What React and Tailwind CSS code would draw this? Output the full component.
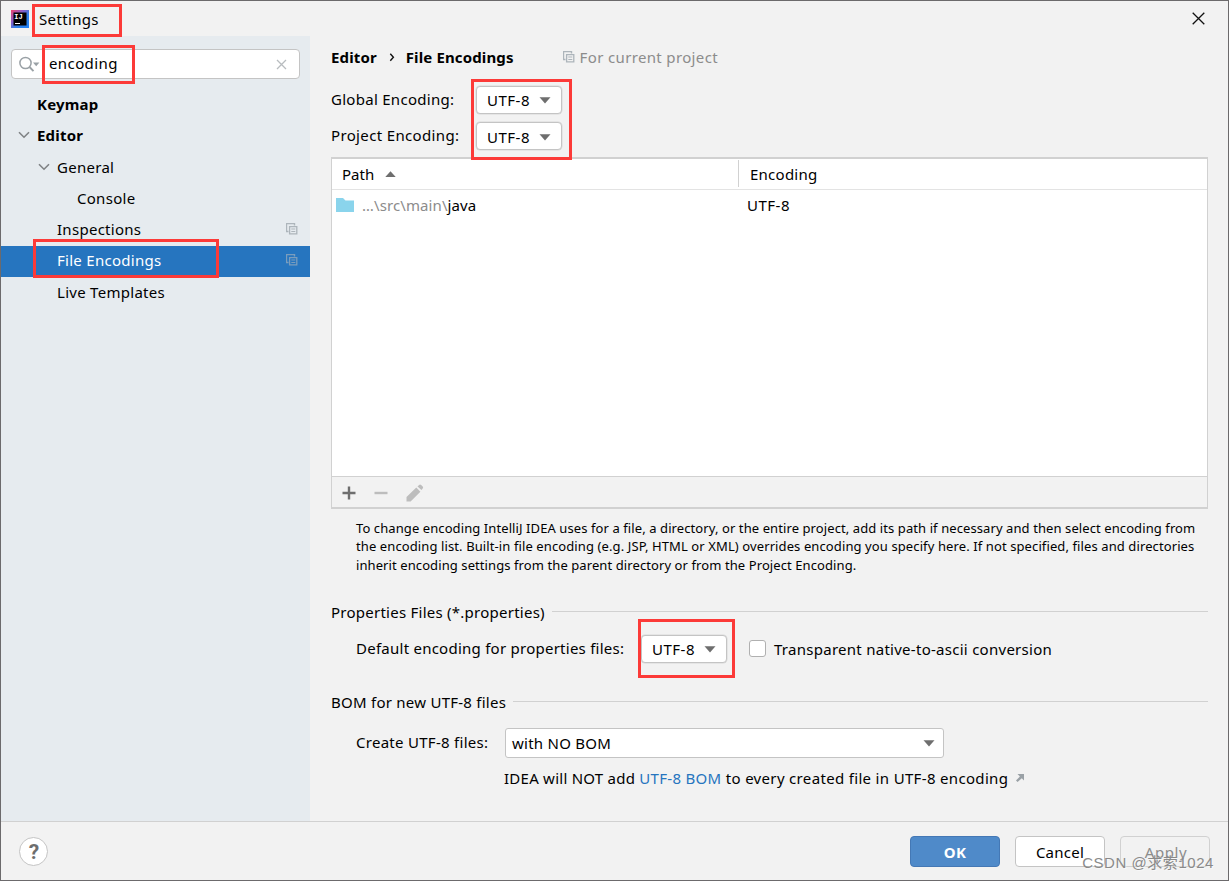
import { useState } from "react";

const treeItems = [
  { label: "Keymap", indent: "pl-[36px]", bold: true },
  { label: "Editor", indent: "pl-[17px]", bold: true, open: true },
  { label: "General", indent: "pl-[37px]", open: true },
  { label: "Console", indent: "pl-[76px]" },
  { label: "Inspections", indent: "pl-[56px]", project: true },
  { label: "File Encodings", indent: "pl-[56px]", project: true },
  { label: "Live Templates", indent: "pl-[56px]" },
];

function AppLogo() {
  return (
    <svg width="18" height="18" viewBox="0 0 18 18" className="shrink-0">
      <defs>
        <linearGradient id="logo" x1="0" y1="0" x2="1" y2="1">
          <stop offset="0" stopColor="#f0436f" />
          <stop offset="0.35" stopColor="#8a5cc4" />
          <stop offset="0.6" stopColor="#2f7fe8" />
          <stop offset="1" stopColor="#1f80f5" />
        </linearGradient>
      </defs>
      <rect width="18" height="18" fill="url(#logo)" />
      <rect x="2.5" y="2.5" width="13" height="13" fill="#000" />
      <text x="3.2" y="8.8" fontSize="7" fontWeight="700" fontFamily="Liberation Mono, monospace" letterSpacing="0" fill="#fff">IJ</text>
      <rect x="4" y="13" width="5" height="1" fill="#fff" />
    </svg>
  );
}

function ProjectIcon({ className }) {
  return (
    <svg width="12" height="12" viewBox="0 0 12 12" className={className}>
      <path d="M2.5 8.5h-2v-8h8v2" fill="none" stroke="currentColor" strokeWidth="1.4" />
      <path d="M3.6 3.6h7.2v7.2h-7.2z" fill="none" stroke="currentColor" strokeWidth="1.3" />
      <path d="M5.3 6h4M5.3 8.5h4" stroke="currentColor" strokeWidth="1.2" />
    </svg>
  );
}

function Chevron() {
  return (
    <svg width="12" height="8" viewBox="0 0 12 8" className="shrink-0">
      <path d="M1 1.2l5 5 5-5" fill="none" stroke="#7f8284" strokeWidth="1.6" />
    </svg>
  );
}

function Arrow() {
  return (
    <svg width="12" height="7" viewBox="0 0 12 7" className="shrink-0">
      <path d="M0.5 0.3h11L6 6.5z" fill="#6e6e6e" />
    </svg>
  );
}

function Combo({ value, className = "" }) {
  return (
    <button
      className={`flex h-7 w-[86px] shrink-0 items-center justify-between rounded-[4px] border border-[#c4c4c4] bg-white pl-[10px] pr-[10px] shadow-[0_0_0_0.5px_#d8d8d8] ${className}`}
    >
      <span className="tracking-[0.5px]">{value}</span>
      <Arrow />
    </button>
  );
}

function SectionTitle({ children }) {
  return (
    <div className="flex h-5 items-center gap-[7px]">
      <span className="tracking-[0.25px]">{children}</span>
      <span className="mb-px h-px flex-1 bg-[#d1d1d1]" />
    </div>
  );
}

// Red annotation frame
function Mark({ className }) {
  return <div className={`pointer-events-none absolute border-[3px] border-[#fc3a38] ${className}`} />;
}

export default function App() {
  const [selected, setSelected] = useState("File Encodings");
  const [query, setQuery] = useState("encoding");
  const [ascii, setAscii] = useState(false);

  return (
    <div className="relative flex h-[881px] w-[1229px] flex-col overflow-hidden border border-[#6c6a6c] bg-[#f2f2f2] font-['Noto_Sans','Noto_Sans_CJK_SC',sans-serif] text-[15px] leading-5 tracking-[0.25px] text-black">
      {/* Title bar */}
      <div className="flex h-[35px] shrink-0 items-center justify-between pl-[10px] pr-[23px]">
        <div className="flex items-center gap-[10px]">
          <AppLogo />
          <span className="tracking-[0.35px]">Settings</span>
        </div>
        <svg width="13" height="13" viewBox="0 0 13 13">
          <path d="M0.7 0.7l11.6 11.6M12.3 0.7L0.7 12.3" stroke="#111" strokeWidth="1.3" />
        </svg>
      </div>

      <div className="flex min-h-0 flex-1">
        {/* Sidebar */}
        <div className="flex w-[309px] shrink-0 flex-col bg-[#e6ebef]">
          <div className="mx-[10px] mt-[13px] mb-[10.4px] flex h-[30px] items-center rounded-[4px] border border-[#c4c4c4] bg-white pl-[7px] pr-3">
            <svg width="21" height="17" viewBox="0 0 21 17" className="shrink-0">
              <circle cx="6.5" cy="7" r="5.6" fill="none" stroke="#9aa1a6" strokeWidth="1.5" />
              <path d="M10.5 11l4 4.2" stroke="#9aa1a6" strokeWidth="1.9" />
              <path d="M14 6.5h6.4l-3.2 3.8z" fill="#9aa1a6" />
            </svg>
            <input
              value={query}
              onChange={(e) => setQuery(e.target.value)}
              className="mb-[2px] ml-[9px] min-w-0 flex-1 bg-transparent tracking-[0.4px] outline-none"
            />
            <svg width="11" height="11" viewBox="0 0 11 11" className="shrink-0">
              <path d="M1 1l9 9M10 1l-9 9" stroke="#b8bcbf" strokeWidth="1.3" />
            </svg>
          </div>
          {treeItems.map((item) => (
            <div
              key={item.label}
              onClick={() => setSelected(item.label)}
              className={`flex h-[31.25px] shrink-0 items-center gap-[7px] pb-[1.9px] pr-3 ${item.indent} ${
                item.label === selected ? "bg-[#2675bf] text-white" : ""
              }`}
            >
              {item.open && <Chevron />}
              <span className={item.bold ? "flex-1 font-bold tracking-[0.2px]" : "flex-1 tracking-[0.28px]"}>{item.label}</span>
              {item.project && <ProjectIcon className={item.label === selected ? "text-[#7a9dbd]" : "text-[#adb5bb]"} />}
            </div>
          ))}
        </div>

        {/* Page */}
        <div className="flex min-w-0 flex-1 flex-col pl-[21px] pr-5">
          <div className="mt-[6px] flex h-[30px] items-center font-bold tracking-[0.13px]">
            <span>Editor</span>
            <svg width="6" height="9" viewBox="0 0 6 9" className="mr-[11px] ml-3">
              <path d="M1.3 0.8L4.4 4.3 1.3 7.8" fill="none" stroke="#111" strokeWidth="1.4" />
            </svg>
            <span>File Encodings</span>
            <span className="ml-[49px] flex items-center gap-[5px] font-normal tracking-[0.35px] text-[#8c8c8c]">
              <ProjectIcon className="text-[#adb5bb]" />
              For current project
            </span>
          </div>

          <div className="mt-[14px] grid grid-cols-[145px_1fr] gap-y-2">
            <span className="pt-[3px] tracking-[0.28px]">Global Encoding:</span>
            <Combo value="UTF-8" />
            <span className="pt-[3px] tracking-[0.35px]">Project Encoding:</span>
            <Combo value="UTF-8" className="pt-[2px]" />
          </div>

          {/* Table */}
          <div className="mt-[7px] flex h-[352px] shrink-0 flex-col border-x border-y-2 border-[#d1d1d1] bg-white">
            <div className="flex h-[31px] shrink-0 items-center border-b border-[#e3e3e3]">
              <div className="flex w-[406px] items-center gap-[10.5px] pl-[10px]">
                <span className="tracking-[0px]">Path</span>
                <svg width="11" height="6" viewBox="0 0 11 6" className="mb-px">
                  <path d="M0.3 5.9h10.4L5.5 0.2z" fill="#6e6e6e" />
                </svg>
              </div>
              <div className="mt-[-2px] h-[27px] w-px bg-[#d1d1d1]" />
              <span className="pl-[11px]">Encoding</span>
            </div>
            <div className="flex h-[29px] items-center pl-1">
              <svg width="18" height="14" viewBox="0 0 18 14" className="shrink-0">
                <path d="M0 0h7l2.5 2.4H18V14H0z" fill="#8ad4ec" />
              </svg>
              <span className="ml-2 w-[385px] tracking-[0.1px]">
                <span className="text-[#8c8c8c]">…\src\main\</span>java
              </span>
              <span className="tracking-[0.5px]">UTF-8</span>
            </div>
            <div className="mt-auto flex h-[31px] items-center border-t border-[#d1d1d1] bg-[#f2f2f2] pt-[2px] pl-[10px]">
              <svg width="14" height="14" viewBox="0 0 14 14">
                <path d="M7 0.5v13M0.5 7h13" stroke="#6e6e6e" strokeWidth="2.4" />
              </svg>
              <svg width="14" height="14" viewBox="0 0 14 14" className="ml-[18px]">
                <path d="M0.5 7h13" stroke="#bdbdbd" strokeWidth="2.4" />
              </svg>
              <svg width="18" height="18" viewBox="0 0 18 18" className="mb-px ml-[18px]">
                <path d="M0.5 17.5v-4.4L10.3 3.6l4.1 4.1-9.8 9.8zM11.5 2.5l1.6-1.6q1-.9 2 0l1.6 1.6q.9 1 0 2l-1.2 1.6z" fill="#bdbdbd" />
              </svg>
            </div>
          </div>

          <p className="mt-[10px] ml-[25px] h-[55px] text-[13px] leading-[18.4px] tracking-[0.09px] whitespace-nowrap">
            To change encoding IntelliJ IDEA uses for a file, a directory, or the entire project, add its path if necessary and then select encoding from
            <br />
            <span className="tracking-[0.105px]">
              the encoding list. Built-in file encoding (e.g. JSP, HTML or XML) overrides encoding you specify here. If not specified, files and directories
            </span>
            <br />
            inherit encoding settings from the parent directory or from the Project Encoding.
          </p>

          <div className="mt-[28px]">
            <SectionTitle>Properties Files (*.properties)</SectionTitle>
          </div>
          <div className="mt-[13px] ml-[25px] flex h-7 items-center">
            <span className="mb-[2px] w-[285px]">Default encoding for properties files:</span>
            <Combo value="UTF-8" />
            <label className="ml-[22px] flex items-center gap-2 tracking-[0.27px]">
              <input
                type="checkbox"
                checked={ascii}
                onChange={() => setAscii(!ascii)}
                className="mb-px size-[17px] appearance-none rounded-[3px] border border-[#b0b0b0] bg-white checked:bg-[#4f8ac9]"
              />
              Transparent native-to-ascii conversion
            </label>
          </div>

          <div className="mt-[29px]">
            <SectionTitle>BOM for new UTF-8 files</SectionTitle>
          </div>
          <div className="mt-[16px] ml-[25px] flex items-center">
            <span className="mb-[2px] w-[149px] tracking-[0.28px]">Create UTF-8 files:</span>
            <button className="flex h-[30px] w-[439px] items-center justify-between rounded-[3px] border border-[#c4c4c4] bg-white pl-[6px] pr-2">
              <span>with NO BOM</span>
              <Arrow />
            </button>
          </div>
          <div className="mt-[10px] ml-[173px] flex items-center whitespace-pre">
            IDEA will NOT add <span className="tracking-[0.3px] text-[#2675bf]">UTF-8 BOM</span>
            <span className="tracking-[0.33px]"> to every created file in UTF-8 encoding</span>
            <svg width="8" height="8" viewBox="0 0 8 8" className="ml-2">
              <path d="M1.5 0h6.5v6.5L5.8 4.3 1.6 8 0 6.4l3.9-4z" fill="#9aa1a6" />
            </svg>
          </div>
        </div>
      </div>

      {/* Footer */}
      <div className="flex h-[59px] shrink-0 items-center border-t border-[#d1d1d1] px-[18px]">
        <button className="flex size-[29px] items-center justify-center rounded-full border border-[#c4c4c4] bg-white pt-px pl-px font-['Roboto',sans-serif] text-[21px] font-bold text-[#6e6e6e]">
          ?
        </button>
        <div className="ml-auto flex gap-[15px] *:h-[31px] *:w-[90px] *:rounded-[4px] *:border *:pt-px">
          <button className="border-[#4478b5] bg-[#4f8ac9] font-bold text-white">OK</button>
          <button className="border-[#c4c4c4] bg-white">Cancel</button>
          <button className="border-[#d1d1d1] pl-[2px] text-[#8c8c8c] tracking-[0.6px]">Apply</button>
        </div>
      </div>

      <Mark className="left-[31px] top-[3px] h-[33px] w-[90px]" />
      <Mark className="left-[41px] top-[44px] h-[39px] w-[93px]" />
      <Mark className="left-[32px] top-[238px] h-[39px] w-[186px]" />
      <Mark className="left-[470px] top-[78px] h-[81px] w-[101px]" />
      <Mark className="left-[637px] top-[618px] h-[59px] w-[97px]" />
      <div className="pointer-events-none absolute right-[14px] bottom-[7px] font-['Liberation_Sans','Noto_Sans_CJK_SC',sans-serif] text-[15px] tracking-[0.55px] text-[#8a8a8a] [text-shadow:1px_1px_0_#fff8]">
        CSDN @求索1024
      </div>
    </div>
  );
}
